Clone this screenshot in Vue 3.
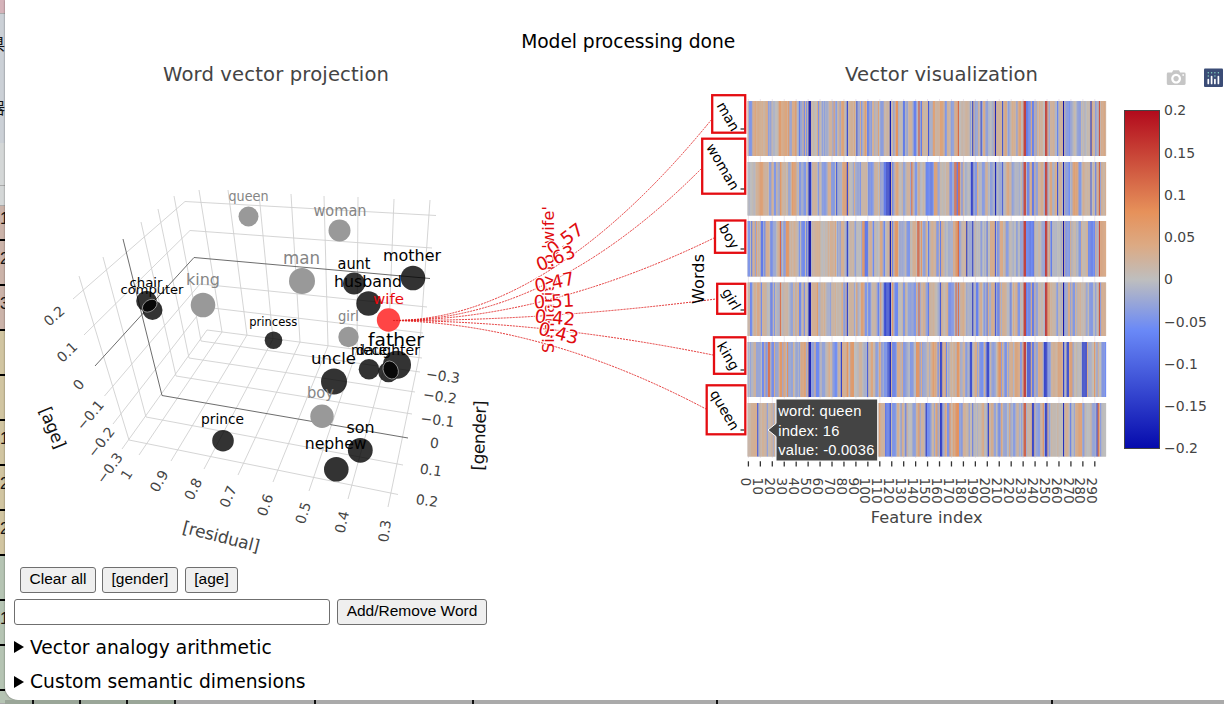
<script setup>
const scale = [
  [0, 5, 10, 172], [0.35, 106, 137, 247], [0.5, 190, 190, 190],
  [0.6, 220, 170, 132], [0.7, 230, 145, 90], [1, 178, 10, 28],
]
function colour(v) {
  const t = Math.min(1, Math.max(0, (v + 0.2) / 0.4))
  let k = 1
  while (scale[k][0] < t) k++
  const a = scale[k - 1]
  const b = scale[k]
  const f = (t - a[0]) / (b[0] - a[0])
  return `rgb(${[1, 2, 3].map(i => Math.round(a[i] + (b[i] - a[i]) * f)).join(',')})`
}

// Each vector: [first index, last index, value] runs; the rest is low-amplitude noise.
const vectors = [
  { y: 101, h: 55, seed: 11, runs: [[0, 0, .02], [1, 3, -.06], [4, 9, .05], [10, 14, .03], [15, 16, .05], [19, 19, -.05], [20, 25, 0], [26, 27, .08], [28, 33, .05], [34, 34, .09], [36, 36, -.04], [38, 39, .05], [40, 40, .1], [43, 43, -.1], [44, 45, -.04], [47, 47, -.08], [49, 49, -.07], [51, 52, -.19], [54, 57, .01], [59, 59, -.07], [62, 65, -.03], [68, 70, .03], [72, 72, .07], [74, 74, -.05], [79, 80, .07], [83, 83, -.14], [85, 89, .04], [91, 91, -.12], [95, 95, -.06], [98, 98, .08], [100, 101, -.09], [103, 103, -.06], [109, 109, .07], [112, 112, -.06], [114, 117, .03], [119, 119, -.2], [122, 122, -.05], [124, 125, .1], [130, 131, -.1], [133, 133, -.06], [135, 137, .03], [139, 140, -.09], [143, 143, .14], [145, 145, -.1], [147, 149, .02], [151, 151, -.12], [155, 156, .07], [158, 160, .03], [161, 163, .07], [165, 165, -.06], [168, 168, .03], [171, 172, -.04], [174, 175, .05], [176, 176, .12], [178, 185, .02], [186, 186, -.04], [188, 188, -.15], [191, 192, -.03], [195, 195, -.13], [198, 198, .05], [200, 200, -.06], [202, 205, -.02], [207, 207, -.18], [209, 212, .05], [213, 213, -.13], [215, 216, .06], [218, 218, -.05], [220, 224, .03], [225, 225, -.05], [227, 228, .07], [231, 232, .16], [233, 234, -.1], [235, 236, -.07], [237, 237, .05], [238, 239, -.09], [242, 246, .03], [249, 250, .16], [253, 255, .03], [259, 259, -.09], [261, 263, .03], [264, 264, -.2], [266, 269, -.06], [272, 275, 0], [277, 278, -.05], [280, 286, 0], [287, 287, -.16], [291, 291, -.06], [294, 294, .14], [296, 299, .05]] },
  { y: 162, h: 53.5, seed: 37, runs: [[0, 5, 0], [8, 13, .055], [14, 17, .03], [18, 19, -.05], [22, 23, -.06], [27, 27, .09], [29, 32, .02], [34, 35, -.04], [37, 40, .065], [43, 44, -.06], [47, 48, -.06], [51, 52, -.17], [55, 57, .03], [59, 59, -.06], [62, 65, -.05], [67, 69, .04], [70, 72, -.06], [74, 74, -.11], [76, 78, -.02], [80, 82, .07], [83, 83, -.14], [85, 87, 0], [90, 94, -.04], [96, 98, .02], [101, 104, -.07], [106, 108, .03], [111, 111, -.05], [114, 115, -.1], [116, 118, -.13], [119, 119, -.2], [121, 121, -.09], [123, 126, .05], [130, 131, -.04], [133, 135, .03], [137, 137, .11], [140, 141, -.06], [143, 143, .07], [145, 148, .01], [149, 154, -.085], [156, 158, .07], [161, 168, .01], [169, 170, -.07], [171, 172, -.03], [173, 174, .11], [175, 175, -.1], [176, 177, .11], [179, 179, -.07], [182, 185, -.01], [187, 188, -.14], [190, 191, -.06], [196, 197, -.05], [200, 200, .04], [203, 204, -.05], [207, 207, -.18], [210, 212, -.03], [213, 213, -.11], [216, 220, .04], [222, 228, -.02], [231, 232, .15], [234, 235, -.09], [238, 239, -.1], [243, 247, .04], [249, 250, .16], [253, 254, .06], [259, 259, -.13], [261, 262, .04], [264, 264, -.19], [266, 269, -.06], [272, 276, .07], [277, 278, -.06], [280, 285, .03], [287, 287, -.11], [291, 291, -.1], [294, 294, .13], [296, 299, .03]] },
  { y: 221, h: 55.5, seed: 53, runs: [[0, 1, -.06], [3, 3, -.1], [5, 5, .04], [7, 7, .07], [9, 9, .05], [11, 12, -.1], [14, 14, -.08], [16, 17, .04], [19, 20, -.08], [21, 23, -.03], [25, 26, .04], [27, 27, .12], [30, 30, -.06], [32, 34, .09], [37, 41, .03], [43, 43, -.06], [45, 47, -.08], [49, 49, -.1], [51, 52, -.2], [54, 59, .03], [62, 66, .01], [69, 71, .04], [73, 73, .06], [75, 75, -.05], [78, 80, .04], [83, 83, -.15], [85, 88, .03], [91, 94, -.01], [96, 97, .1], [98, 100, -.1], [102, 103, .04], [105, 105, -.08], [107, 110, 0], [111, 112, .06], [114, 114, -.08], [117, 118, .03], [119, 119, -.2], [121, 121, -.1], [123, 125, .09], [127, 131, -.03], [133, 135, -.06], [138, 140, .04], [142, 143, .12], [145, 145, .09], [147, 148, -.05], [151, 151, -.1], [153, 157, .04], [158, 159, -.06], [161, 161, -.1], [164, 167, 0], [169, 171, -.02], [174, 175, .09], [176, 176, .12], [179, 181, .02], [183, 183, -.16], [185, 187, -.03], [188, 188, -.15], [191, 194, .01], [195, 195, -.06], [200, 200, -.1], [203, 205, .05], [207, 207, -.12], [209, 209, -.08], [212, 213, .05], [216, 217, -.05], [220, 224, -.01], [225, 225, -.07], [228, 230, -.04], [231, 232, .16], [233, 239, -.09], [241, 245, .01], [249, 250, .17], [252, 252, .06], [254, 254, -.1], [257, 261, 0], [264, 264, -.2], [266, 269, -.06], [272, 275, 0], [277, 278, -.06], [280, 284, .02], [285, 290, -.08], [292, 292, -.03], [294, 294, .15], [295, 299, .05]] },
  { y: 282.5, h: 53.5, seed: 71, runs: [[0, 1, .02], [2, 3, -.08], [5, 6, .04], [8, 9, .06], [11, 11, -.08], [14, 15, .03], [19, 20, -.09], [22, 22, -.06], [27, 27, .11], [30, 33, .03], [36, 37, -.04], [40, 40, .06], [43, 44, -.08], [47, 47, -.07], [51, 52, -.2], [54, 56, .04], [58, 58, .08], [61, 62, .03], [66, 68, -.02], [71, 78, .02], [81, 81, -.06], [83, 83, -.15], [85, 87, .03], [91, 91, .08], [95, 96, .08], [98, 99, -.06], [101, 102, -.08], [104, 107, .02], [109, 109, -.09], [111, 111, .08], [114, 118, -.12], [119, 119, -.2], [121, 121, .1], [123, 125, -.08], [130, 131, -.06], [134, 135, -.04], [139, 140, -.06], [143, 143, .12], [145, 148, .03], [151, 151, -.1], [153, 158, .02], [161, 161, -.12], [163, 166, .02], [168, 172, -.06], [174, 174, .12], [176, 176, .11], [178, 182, .03], [183, 187, -.02], [188, 188, -.16], [191, 192, -.09], [195, 195, .06], [198, 198, -.06], [200, 200, -.1], [204, 205, .05], [207, 207, -.12], [209, 210, -.09], [213, 215, .04], [220, 220, -.1], [222, 222, .05], [226, 227, -.06], [231, 232, .16], [233, 236, -.08], [238, 239, -.1], [243, 246, .01], [249, 250, .17], [251, 252, .07], [255, 257, .02], [259, 259, -.05], [264, 264, -.2], [268, 268, .05], [272, 273, -.06], [276, 282, .02], [286, 288, -.06], [291, 291, -.05], [294, 294, .14], [296, 299, .05]] },
  { y: 342, h: 55, seed: 97, runs: [[0, 3, -.02], [5, 6, .03], [8, 10, -.04], [12, 13, -.08], [14, 14, .04], [15, 15, -.07], [17, 18, .11], [20, 21, -.08], [23, 25, -.04], [27, 28, .09], [30, 30, .07], [33, 33, .1], [36, 37, -.04], [40, 41, -.04], [44, 48, .055], [51, 52, -.19], [54, 55, -.05], [57, 59, -.08], [62, 64, -.04], [66, 69, .03], [71, 74, -.06], [76, 76, .04], [78, 78, -.15], [80, 82, .04], [83, 83, .1], [86, 88, .09], [89, 91, 0], [93, 95, .03], [97, 99, -.02], [100, 100, -.12], [103, 104, .06], [107, 108, -.05], [110, 110, .06], [112, 112, -.07], [114, 116, -.06], [117, 118, -.11], [119, 119, -.18], [121, 123, -.09], [125, 127, .05], [130, 133, -.04], [136, 138, -.06], [141, 143, .1], [144, 144, -.04], [147, 148, -.03], [150, 151, .02], [154, 157, .065], [159, 159, -.07], [161, 162, -.14], [165, 165, .06], [166, 166, -.08], [169, 173, .03], [175, 176, .09], [180, 181, .03], [183, 183, -.06], [186, 187, -.13], [190, 191, .05], [194, 196, -.07], [200, 201, -.14], [204, 207, -.04], [210, 211, .1], [212, 212, -.05], [215, 216, -.07], [219, 220, .04], [224, 225, .07], [228, 229, -.05], [231, 232, .16], [234, 236, -.12], [238, 239, -.1], [243, 246, .04], [248, 250, -.14], [251, 252, -.05], [254, 257, .04], [259, 262, .05], [264, 264, -.15], [267, 268, -.13], [270, 271, .08], [274, 278, 0], [280, 283, -.13], [285, 287, -.02], [290, 290, .09], [293, 293, .04], [296, 299, -.06]] },
  { y: 403, h: 53.5, seed: 131, runs: [[0, 2, .02], [4, 6, .04], [8, 8, -.12], [11, 14, .02], [17, 20, .03], [110, 110, .07], [112, 114, .03], [115, 118, -.09], [119, 119, -.13], [121, 123, -.07], [125, 126, .04], [128, 128, -.05], [132, 132, -.1], [135, 137, 0], [140, 140, -.04], [143, 143, .09], [145, 147, .03], [149, 149, -.15], [150, 152, -.07], [155, 155, .03], [158, 158, .09], [161, 162, -.15], [165, 165, .06], [167, 168, -.07], [169, 169, .09], [172, 172, .07], [174, 176, .1], [179, 179, -.07], [181, 184, .02], [188, 188, -.1], [190, 195, 0], [197, 197, .05], [201, 201, -.15], [204, 204, .06], [206, 207, -.04], [210, 210, -.09], [212, 212, .06], [214, 215, -.04], [219, 219, .07], [222, 223, -.05], [225, 226, .03], [229, 229, -.05], [231, 232, .13], [234, 236, .02], [238, 239, -.14], [243, 244, -.05], [247, 247, .1], [249, 250, -.15], [252, 252, -.05], [255, 263, .01], [264, 264, -.17], [266, 267, .04], [270, 270, -.1], [276, 279, .07], [281, 281, -.06], [284, 286, 0], [289, 290, -.04], [292, 292, -.12], [293, 293, .12], [295, 295, -.05], [297, 299, 0]] },
]

const CELL = 358.4 / 300
const rows = vectors.map(v => {
  let s = v.seed
  const rnd = () => ((s = (s * 16807) % 2147483647) / 2147483647)
  for (let i = 0; i < 9; i++) rnd()
  const values = Array.from({ length: 300 }, () => (rnd() - 0.48) * 0.08)
  v.runs.forEach(([a, b, val]) => {
    const level = Math.abs(val) > 0.1 ? val : val * 0.8
    for (let i = a; i <= b; i++) values[i] = level + (b - a > 2 ? (rnd() - 0.5) * 0.03 : 0)
  })
  return { y: v.y, h: v.h, cells: values.map((val, i) => ({ x: 747.6 + i * CELL, fill: colour(val) })) }
})

const grid = [
  'M73 299L185 201.5L436 215.5', 'M84 335L190 230.5L432 248', 'M104.5 396L200 284L427 307',
  'M113 424L204 307L423 333', 'M122 449L207 330L422 358',
  'M79 276L129 440L398 494.5', 'M103 257L146 417L403 465', 'M141 222L176 376L412 414',
  'M158 209L189 358L415 392', 'M174 196L201 341L420 372',
  'M199 190L222 332L139 455', 'M228 190L247 335L171 461', 'M259 194L273 339L204 469',
  'M291 194L300 342L238 475', 'M324 196L328 346L273 482', 'M358 197L357 350L309 491',
  'M394 199L388 354L348 499', 'M430 200L419 357.5L388 507',
]
const zeroLines = ['M95 366L194 257.5L430 278.5', 'M123 239L162 395.5L408 438']

const axisTicks = [
  ['0.2', 54, 316, -41], ['0.1', 67, 352, -44], ['0', 78.5, 384.5, -50], ['−0.1', 90, 415, -50], ['−0.2', 101, 442, -52], ['−0.3', 109.5, 468, -54],
  ['1', 126.5, 474.5, -57], ['0.9', 159, 481, -60], ['0.8', 193, 489, -63], ['0.7', 228, 496.5, -67], ['0.6', 265, 505, -70], ['0.5', 303, 513, -73], ['0.4', 342, 522, -77], ['0.3', 384.5, 531, -82],
  ['−0.3', 443, 376, 8], ['−0.2', 440, 396.5, 8], ['−0.1', 437.5, 420, 7], ['0', 434.5, 443, 6], ['0.1', 431, 470, 8], ['0.2', 427, 500.5, 8],
]

const grey = 'grey'
const dark = 'dark'
const points = [
  ['queen', 248.5, 216.5, 10, grey, 248.5, 201, 40, 14], ['woman', 339.5, 230.5, 11, grey, 340, 215.5, 53, 15],
  ['man', 302, 281, 13, grey, 301.5, 264, 37, 17.5], ['king', 203, 305, 12.3, grey, 203, 285, 34, 16.5],
  ['chair', 146.5, 301, 10.3, dark, 146, 287, 33, 13], ['computer', 152.5, 310, 10, dark, 152, 294, 63, 13],
  ['girl', 348.5, 337, 10.2, grey, 348.5, 321, 21, 14], ['princess', 273.5, 340.3, 8.8, dark, 273.3, 326, 48, 12],
  ['mother', 413, 278, 12.3, dark, 412, 261.3, 58, 16], ['aunt', 354, 283.5, 11, dark, 354, 268.5, 33, 15],
  ['husband', 368.5, 303.5, 12.2, dark, 368, 287, 68, 15.5], ['boy', 322, 416.3, 11.7, grey, 320.5, 398, 27, 15],
  ['uncle', 334, 381.5, 13, dark, 333.5, 363.7, 45, 16.5], ['niece', 369, 369.3, 10.3, dark, 369, 355, 36, 13.5],
  ['father', 397, 364.8, 14, dark, 396, 346, 56, 18.5], ['daughter', 388.5, 372, 10.3, dark, 388, 355, 64, 13.5],
  ['wife', 388.5, 320, 11.7, 'red', 388.5, 304, 31, 14.5], ['prince', 223, 440.7, 10.8, dark, 222.5, 424, 43, 14],
  ['son', 360.3, 450.3, 12.4, dark, 360.5, 433, 28, 15.5], ['nephew', 336.3, 469.3, 12.3, dark, 335.7, 449.3, 62, 15.5],
].map(([label, x, y, r, kind, lx, ly, w, size]) => ({ label, x, y, r, kind, lx, ly, w, size }))

const links = [
  { d: 'M393 320.5Q548 320 712 119', t: '0.57', x: 565, y: 239, a: -37 },
  { d: 'M393 320.5Q550 321 702 168', t: '0.63', x: 555.5, y: 258, a: -22 },
  { d: 'M393 320.5Q545 320 714 238', t: '0.47', x: 554.5, y: 282, a: -12 },
  { d: 'M393 320.5Q545 321 716 299', t: '0.51', x: 554, y: 301, a: -3 },
  { d: 'M393 320.5Q545 321 713 355', t: '0.42', x: 555, y: 317.5, a: 5 },
  { d: 'M393 320.5Q545 324 706 409', t: '0.43', x: 558.5, y: 333, a: 15 },
]
const wordBoxes = [
  { t: 'man', x: 712.2, y: 95.2, w: 33, h: 37.5, cx: 727.5, cy: 117, tick: 129 },
  { t: 'woman', x: 702.2, y: 138.7, w: 43, h: 55, cx: 722, cy: 167, tick: 189 },
  { t: 'boy', x: 715, y: 220.5, w: 30.3, h: 32.3, cx: 728.5, cy: 237, tick: 249 },
  { t: 'girl', x: 717.2, y: 283.8, w: 28, h: 30, cx: 730.5, cy: 299.5, tick: 310 },
  { t: 'king', x: 714, y: 337.3, w: 31.3, h: 36.5, cx: 727.5, cy: 356.5, tick: 370 },
  { t: 'queen', x: 706.7, y: 385.3, w: 38.6, h: 49, cx: 724, cy: 410.5, tick: 430 },
]
const featureTicks = Array.from({ length: 30 }, (_, i) => ({ n: i * 10, x: 748.4 + i * 11.945 }))
const barTicks = ['0.2', '0.15', '0.1', '0.05', '0', '−0.05', '−0.1', '−0.15', '−0.2']
const stops = scale.map(([t, r, g, b]) => ({ o: 1 - t, c: `rgb(${r},${g},${b})` })).reverse()

const edgeCells = [
  { h: 14, k: 'rose', t: '' }, { h: 57, k: 'ice', t: '県' }, { h: 72, k: 'ice', t: '器' }, { h: 43, k: 'pale', t: '' }, { h: 20, k: 'pale', t: '' },
  { h: 35, k: 'clay row', t: '1' }, { h: 45, k: 'clay row', t: '2' }, { h: 45, k: 'clay row', t: '3' }, { h: 45, k: 'sand row', t: '' },
  { h: 45, k: 'sand row', t: '' }, { h: 45, k: 'sand row', t: '1' }, { h: 45, k: 'sand row', t: '2' }, { h: 45, k: 'sand row', t: '2' },
  { h: 45, k: 'sage row', t: '' }, { h: 45, k: 'sage row', t: '1' }, { h: 45, k: 'sage row', t: '' }, { h: 13, k: 'sage', t: '' },
]
const bottomCells = [34, 47, 47, 48, 140, 158, 244, 335, 173]
</script>

<template>
  <div class="page">
    <aside class="edge">
      <div v-for="(c, i) in edgeCells" :key="i" :class="['cell', ...c.k.split(' ')]" :style="{ height: c.h + 'px' }"><span>{{ c.t }}</span></div>
    </aside>
    <div class="main">
      <div class="card">
        <svg class="charts" viewBox="5 0 1219 560" width="1219" height="560">
          <defs>
            <linearGradient id="bar" x1="0" y1="0" x2="0" y2="1">
              <stop v-for="s in stops" :key="s.o" :offset="s.o" :stop-color="s.c" />
            </linearGradient>
          </defs>

          <text class="heading" x="628.2" y="47.5" textLength="214" text-anchor="middle">Model processing done</text>
          <text class="title" x="276" y="80.5" textLength="226" text-anchor="middle">Word vector projection</text>
          <text class="title" x="941.5" y="80.5" textLength="193" text-anchor="middle">Vector visualization</text>

          <!-- 3D scatter -->
          <path v-for="d in grid" :key="d" :d="d" class="grid" />
          <path v-for="d in zeroLines" :key="d" :d="d" class="zero" />
          <text v-for="(a, i) in axisTicks" :key="i" class="tick" text-anchor="middle" dy="5" :transform="`translate(${a[1]} ${a[2]}) rotate(${a[3]})`">{{ a[0] }}</text>
          <text class="axis" text-anchor="middle" dy="5" textLength="79" transform="translate(221 537.5) rotate(14.5)">[residual]</text>
          <text class="axis strong" text-anchor="middle" dy="5" textLength="43" transform="translate(52 428) rotate(68)">[age]</text>
          <text class="axis strong" text-anchor="middle" dy="5" textLength="70" transform="translate(480 435.5) rotate(-88)">[gender]</text>

          <circle v-for="p in points" :key="p.label" :cx="p.x" :cy="p.y" :r="p.r" :class="['dot', p.kind]" />
          <ellipse class="overlap" rx="8" ry="5.5" transform="translate(149.7 305.7) rotate(-35)" />
          <ellipse class="overlap" rx="7.3" ry="9.3" transform="translate(390.7 370) rotate(-25)" />
          <text v-for="p in points" :key="'l' + p.label" :x="p.lx" :y="p.ly" :textLength="p.w" lengthAdjust="spacingAndGlyphs" text-anchor="middle" :font-size="p.size" :class="['label', p.kind]">{{ p.label }}</text>

          <!-- similarity links -->
          <path v-for="l in links" :key="l.d" :d="l.d" class="link" />
          <text class="similarity" text-anchor="middle" dy="5.5" textLength="147" transform="translate(548.3 279.5) rotate(-90)">Similarity to 'wife'</text>
          <text v-for="l in links" :key="l.t" class="score" text-anchor="middle" dy="6.5" :transform="`translate(${l.x} ${l.y}) rotate(${l.a})`">{{ l.t }}</text>

          <!-- heatmap -->
          <path v-for="t in featureTicks" :key="'g' + t.n" :d="`M${t.x} 99V458`" class="faint" />
          <g v-for="r in rows" :key="r.y">
            <rect x="747.6" :y="r.y" width="358.4" :height="r.h" fill="#bdb5b0" />
            <rect v-for="c in r.cells" :key="c.x" :x="c.x" :y="r.y" :width="CELL + 0.15" :height="r.h" :fill="c.fill" opacity="0.93" />
          </g>
          <g v-for="b in wordBoxes" :key="b.t">
            <rect :x="b.x" :y="b.y" :width="b.w" :height="b.h" class="box" />
            <text class="word" text-anchor="middle" dy="4" :transform="`translate(${b.cx} ${b.cy}) rotate(60)`">{{ b.t }}</text>
            <path :d="`M740.5 ${b.tick}h3.7`" class="mark" />
          </g>
          <text class="words" text-anchor="middle" dy="6" textLength="50" transform="translate(697.5 279) rotate(-90)">Words</text>
          <g v-for="t in featureTicks" :key="t.n">
            <path :d="`M${t.x} 461.3v5.2`" class="mark" />
            <text class="feature" :transform="`translate(${t.x - 7.4} 477.5) rotate(90)`">{{ t.n }}</text>
          </g>
          <text class="xname" x="926.7" y="523" textLength="112" text-anchor="middle">Feature index</text>

          <path class="tip" d="M768 430L776 423.5V399H877.7V461H776V436.5Z" />
          <g class="tiptext">
            <text x="778.3" y="416" textLength="83">word: queen</text>
            <text x="778.3" y="435.5" textLength="61">index: 16</text>
            <text x="778.3" y="455" textLength="96">value: -0.0036</text>
          </g>

          <rect x="1124.5" y="110.5" width="35" height="338" fill="url(#bar)" stroke="#444" />
          <text v-for="(t, i) in barTicks" :key="t" class="tick" x="1164" :y="115.3 + i * 42.25">{{ t }}</text>

          <path fill="#c6c6c6" fill-rule="evenodd" d="M1168 72.5h4l1.2-2.2h5.8l1.2 2.2h4q1.4 0 1.4 1.4v9.7q0 1.4-1.4 1.4h-16.2q-1.2 0-1.2-1.4v-9.7q0-1.4 1.2-1.4zM1176.1 73.8a4.9 4.9 0 1 0 .01 0zM1176.1 76a2.7 2.7 0 1 1-.01 0zM1182.4 74.2h1.6v1.5h-1.6z" />
          <rect x="1204" y="68.5" width="19" height="18.5" rx="1" fill="#3b4c76" />
          <path d="M1208.3 79.5v4M1211.6 76.5v7M1214.9 79.5v4M1218.4 76.5v7" stroke="#fff" stroke-width="1.7" stroke-linecap="round" />
          <path d="M1208.3 72.7v.1M1211.6 72.7v.1M1214.9 72.7v.1M1218.4 72.7v.1M1208.3 76v.1M1214.9 76v.1" stroke="#80cfbe" stroke-width="1.5" stroke-linecap="round" />
        </svg>

        <div class="controls">
          <div class="line first">
            <button class="b1">Clear all</button><button class="b2">[gender]</button><button class="b3">[age]</button>
          </div>
          <div class="line second"><input type="text" /><button class="b4">Add/Remove Word</button></div>
          <div class="fold"><i></i><span>Vector analogy arithmetic</span></div>
          <div class="fold"><i></i><span>Custom semantic dimensions</span></div>
        </div>
      </div>
      <div class="bottom"><b v-for="(w, i) in bottomCells" :key="i" :class="{ green: i < 4 }" :style="{ width: w - (i ? 0 : 5) + 'px' }"></b></div>
    </div>
  </div>
</template>

<style>
html, body { margin: 0; overflow: hidden; background: #fff; }
</style>
<style scoped>
.page { display: flex; width: 1224px; height: 704px; overflow: hidden; font-family: "DejaVu Sans", Verdana, sans-serif; background: #b7c3b4; }
.edge { width: 5px; overflow: hidden; flex: none; }
.cell { box-sizing: border-box; width: 5px; overflow: hidden; display: flex; align-items: center; justify-content: flex-end; color: #111; font: 16px "Liberation Sans", "Noto Sans CJK JP", sans-serif; border-bottom: 1px solid #aaa; }
.row { border-bottom: 2px solid #000; padding-bottom: 8px; }
.row span { margin-right: -4px; }
.rose { background: #d5b3ba; }
.ice { background: #cbd0d6; border-bottom: 0; }
.pale { background: #d4d7d7; }
.clay { background: #cbb3a9; }
.sand { background: #d1c5a1; }
.sage { background: #b5c4b3; }
.main { flex: 1; display: flex; flex-direction: column; min-width: 0; }
.card { height: 700px; background: #fff; border-bottom-left-radius: 13px; overflow: hidden; box-shadow: 0 0 2px #0008; }
.charts { display: block; }
.bottom { height: 4px; display: flex; }
.bottom b { box-sizing: border-box; flex: none; background: #aaa; border-right: 2px solid #111; }
.bottom b.green { background: #9aa698; }

.heading { font-size: 18.7px; fill: #000; }
.title { font-size: 19.6px; fill: #444; }
.grid { fill: none; stroke: #d0d0d0; stroke-width: .9; }
.zero { fill: none; stroke: #5c5c5c; stroke-width: .9; }
.tick { font-size: 14px; fill: #444; }
.axis { font-size: 17px; fill: #444; }
.axis.strong { fill: #111; }
.dot.grey { fill: #999; }
.dot.dark { fill: #000; fill-opacity: .8; }
.dot.red { fill: #ff4545; }
.overlap { fill: #080808; stroke: #ccc; stroke-width: .6; }
.label.grey { fill: #858585; }
.label.dark { fill: #000; }
.label.red { fill: #e8080c; }
.link { fill: none; stroke: #e02020; stroke-width: .9; stroke-dasharray: 2 1; }
.similarity { font-size: 16px; fill: #df0c10; }
.score { font-size: 18.2px; fill: #df0c10; stroke: #fff; stroke-width: 2px; paint-order: stroke; }
.faint { stroke: #ece6ee; stroke-width: 1; }
.box { fill: #fff; stroke: #e40d12; stroke-width: 2.3; }
.word { font-size: 14px; fill: #000; }
.words { font-size: 16px; fill: #000; }
.mark { stroke: #333; stroke-width: 1.3; }
.feature { font-size: 13.7px; fill: #444; }
.xname { font-size: 16.2px; fill: #444; }
.tip { fill: #444; stroke: #fff; stroke-width: 1; }
.tiptext { fill: #fff; font: 14.7px "Liberation Sans", Arial, sans-serif; }

.controls { padding-left: 9px; }
.line { display: flex; }
.first { padding: 7px 0 0 6px; gap: 6px; }
.second { padding-top: 6px; gap: 7px; }
button, input { box-sizing: border-box; height: 26px; border: 1px solid #6f6f6f; border-radius: 3px; padding: 0 0 3px; font: 15.5px/21px "Liberation Sans", Arial, sans-serif; color: #000; background: #efefef; white-space: nowrap; }
input { width: 316px; background: #fff; }
.b1 { width: 76px; }
.b2 { width: 76px; }
.b3 { width: 53px; margin-left: 1px; }
.b4 { width: 150px; }
.fold { display: flex; align-items: center; height: 34.5px; gap: 6px; font-size: 18.7px; color: #000; }
.second + .fold { margin-top: 5px; }
.fold i { width: 0; height: 0; border-left: 10px solid #000; border-top: 6px solid transparent; border-bottom: 6px solid transparent; }
</style>
